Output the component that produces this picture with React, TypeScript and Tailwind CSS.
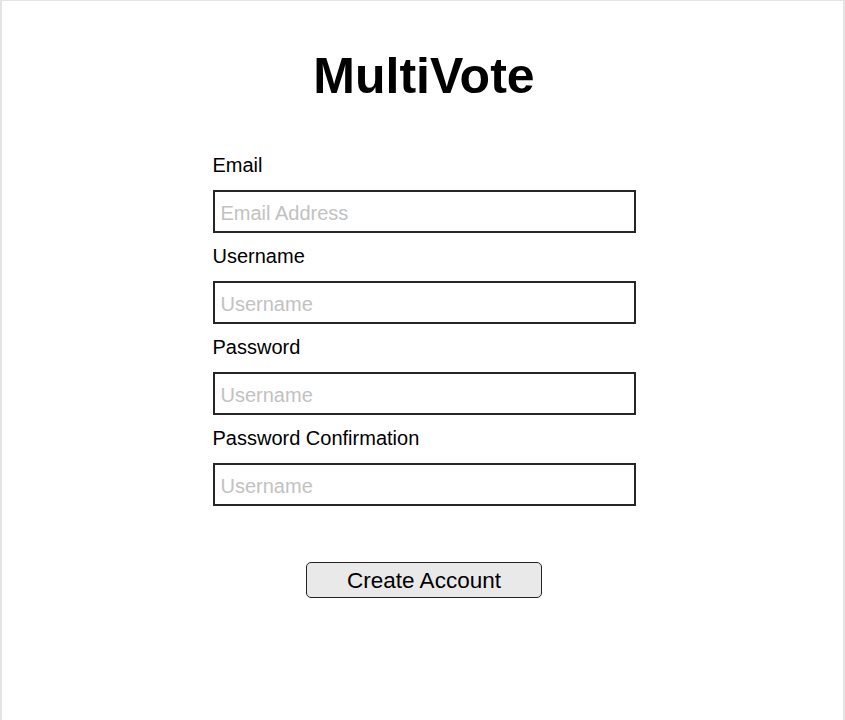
import React, { useState } from "react";

const fields = [
  { label: "Email", placeholder: "Email Address", type: "email" },
  { label: "Username", placeholder: "Username", type: "text" },
  { label: "Password", placeholder: "Username", type: "password" },
  { label: "Password Confirmation", placeholder: "Username", type: "password" },
];

const App: React.FC = () => {
  const [values, setValues] = useState<string[]>(["", "", "", ""]);

  const handleSubmit = (e: React.FormEvent) => {
    e.preventDefault();
  };

  return (
    <div className="h-[720px] bg-white border-l-2 border-t border-r-2 border-[#e4e4e4] font-['Liberation_Sans',Arial,sans-serif] text-black">
      <div className="flex flex-col items-center pl-[3px] pt-[50px]">
        <h1 className="text-[50px] font-bold leading-none">MultiVote</h1>

        <form onSubmit={handleSubmit} className="w-[423px] mt-[53px] flex flex-col">
          {fields.map((f, i) => (
            <div key={f.label} className="flex flex-col mb-[12px]">
              <label className="text-[20px] leading-[23px] mb-[13px]">{f.label}</label>
              <input
                type={f.type}
                value={values[i]}
                onChange={(e) => {
                  const next = [...values];
                  next[i] = e.target.value;
                  setValues(next);
                }}
                placeholder={f.placeholder}
                className="h-[43px] border-2 border-[#262626] px-[6px] pt-[3px] text-[20px] placeholder-[#c2c2c2] outline-none"
              />
            </div>
          ))}

          <div className="flex justify-center mt-[44px]">
            <button
              type="submit"
              className="w-[236px] h-[36px] pt-[2px] bg-[#e9e9e9] border border-[#222222] rounded-[5px] text-[22.5px] leading-none"
            >
              Create Account
            </button>
          </div>
        </form>
      </div>
    </div>
  );
};

export default App;
